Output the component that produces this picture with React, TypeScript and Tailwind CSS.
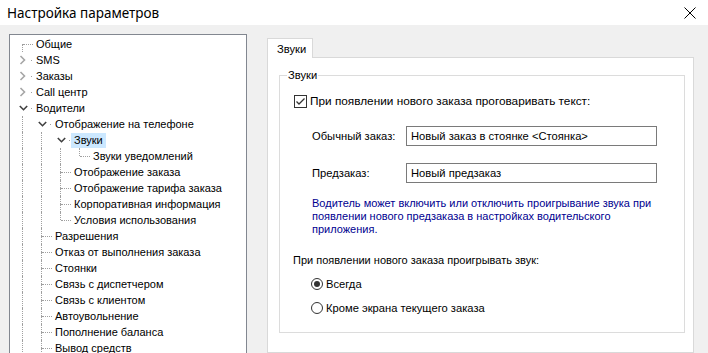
import React from "react";

type Row = {
  d: number;
  t: string;
  kind: "leaf" | "closed" | "open";
  first?: boolean;
  last?: boolean;
  sel?: boolean;
};

const rows: Row[] = [
  { d: 0, t: "Общие", kind: "leaf", first: true },
  { d: 0, t: "SMS", kind: "closed" },
  { d: 0, t: "Заказы", kind: "closed" },
  { d: 0, t: "Call центр", kind: "closed" },
  { d: 0, t: "Водители", kind: "open" },
  { d: 1, t: "Отображение на телефоне", kind: "open" },
  { d: 2, t: "Звуки", kind: "open", sel: true },
  { d: 3, t: "Звуки уведомлений", kind: "leaf", last: true },
  { d: 2, t: "Отображение заказа", kind: "leaf" },
  { d: 2, t: "Отображение тарифа заказа", kind: "leaf" },
  { d: 2, t: "Корпоративная информация", kind: "leaf" },
  { d: 2, t: "Условия использования", kind: "leaf", last: true },
  { d: 1, t: "Разрешения", kind: "leaf" },
  { d: 1, t: "Отказ от выполнения заказа", kind: "leaf" },
  { d: 1, t: "Стоянки", kind: "leaf" },
  { d: 1, t: "Связь с диспетчером", kind: "leaf" },
  { d: 1, t: "Связь с клиентом", kind: "leaf" },
  { d: 1, t: "Автоувольнение", kind: "leaf" },
  { d: 1, t: "Пополнение баланса", kind: "leaf" },
  { d: 1, t: "Вывод средств", kind: "leaf" },
];

const LINE = "border-[#a0a0a0]";

function Gutter() {
  return (
    <div className="w-[19px] h-full shrink-0">
      <div className={`ml-[12px] h-full w-0 border-l border-dotted ${LINE}`} />
    </div>
  );
}

function OwnCell({ r }: { r: Row }) {
  if (r.kind === "leaf") {
    return (
      <div className="w-[23px] h-full shrink-0 flex">
        <div className="w-[12px] shrink-0" />
        <div className="flex flex-col h-full w-px shrink-0">
          <div className={`h-[8px] ${r.first ? "" : `border-l border-dotted ${LINE}`}`} />
          <div className={`h-[8px] ${r.last ? "" : `border-l border-dotted ${LINE}`}`} />
        </div>
        <div className="flex-1 h-full flex items-start pt-[8px]">
          <div className={`w-full h-0 border-t border-dotted ${LINE}`} />
        </div>
      </div>
    );
  }
  return (
    <div className="w-[23px] h-full shrink-0 flex items-center">
      <div className="w-[9px] shrink-0" />
      {r.kind === "closed" ? (
        <svg width="9" height="10" viewBox="0 0 9 10" className="shrink-0">
          <polyline points="1.5,1 5.5,5 1.5,9" fill="none" stroke="#a6a6a6" strokeWidth="1.6" />
        </svg>
      ) : (
        <svg width="9" height="10" viewBox="0 0 9 10" className="shrink-0">
          <polyline points="0.8,3 4.5,6.7 8.2,3" fill="none" stroke="#404040" strokeWidth="1.6" />
        </svg>
      )}
      <div className="flex-1" />
      <div className="w-px h-px bg-[#a0a0a0] mr-px" />
    </div>
  );
}

function Tree() {
  return (
    <div className="w-[238px] h-[400px] shrink-0 border border-[#828790] bg-white pt-[1px] overflow-hidden text-[11px]">
      {rows.map((r, i) => (
        <div key={i} className="flex h-[16px] items-stretch">
          {Array.from({ length: r.d }).map((_, k) => (
            <Gutter key={k} />
          ))}
          <OwnCell r={r} />
          <div className="flex items-center">
            <span
              className={`px-[3px] h-[15px] leading-[15px] whitespace-nowrap ${r.sel ? "bg-[#cce8ff]" : ""}`}
            >
              {r.t}
            </span>
          </div>
        </div>
      ))}
    </div>
  );
}

function TextInput({ value }: { value: string }) {
  return (
    <div className="w-[251px] h-[20px] border border-[#7a7a7a] bg-white pl-[4px] flex items-center whitespace-nowrap overflow-hidden">
      {value}
    </div>
  );
}

function Radio({ checked, label }: { checked?: boolean; label: string }) {
  return (
    <div className="flex items-center h-[16px] ml-[31px]">
      <div className="w-[12px] h-[12px] rounded-full border border-[#333333] bg-white flex items-center justify-center shrink-0">
        {checked && <div className="w-[6px] h-[6px] rounded-full bg-[#333333]" />}
      </div>
      <span className="ml-[3px]">{label}</span>
    </div>
  );
}

export default function App() {
  return (
    <div
      className="w-[708px] h-[353px] overflow-hidden bg-[#f0f0f0] text-black text-[11.2px] leading-[14px]"
      style={{ fontFamily: '"Liberation Sans", Arial, sans-serif' }}
    >
      {/* Title bar */}
      <div className="h-[25px] bg-white flex items-center justify-between pl-[7px] pr-[12px]">
        <span className="text-[13.5px]" style={{ fontFamily: '"Noto Sans", sans-serif' }}>
          Настройка параметров
        </span>
        <svg width="12" height="12" viewBox="0 0 12 12">
          <path d="M0.5 0.5 L11.5 11.5 M11.5 0.5 L0.5 11.5" stroke="#000" strokeWidth="1" />
        </svg>
      </div>

      {/* Body */}
      <div className="h-[328px] flex overflow-hidden">
        <div className="pl-[9px] pt-[9px]">
          <Tree />
        </div>

        <div className="ml-[20px] pt-[13px] flex flex-col">
          {/* Tab header */}
          <div className="flex">
            <div className="relative z-10 -mb-px h-[20px] w-[46px] pl-[9px] border border-b-0 border-[#d9d9d9] bg-white flex items-center">
              Звуки
            </div>
          </div>
          {/* Panel */}
          <div className="w-[427px] h-[400px] border border-[#d9d9d9] bg-white pl-[11px] pt-[10px]">
            <fieldset className="w-[406px] border border-[#dcdcdc] pb-[16px]">
              <legend className="ml-[7px] px-[1px] leading-[14px]">Звуки</legend>

              {/* Checkbox */}
              <div className="flex items-center h-[16px] mt-[11px] ml-[14px]">
                <div className="w-[13px] h-[13px] border border-[#333333] bg-white flex items-center justify-center shrink-0">
                  <svg width="11" height="11" viewBox="0 0 11 11">
                    <polyline points="1.5,5.5 4,8 9.5,2.5" fill="none" stroke="#333333" strokeWidth="1.3" />
                  </svg>
                </div>
                <span className="ml-[3px] text-[11.8px]">При появлении нового заказа проговаривать текст:</span>
              </div>

              <div className="flex items-center h-[20px] mt-[17px] ml-[32px]">
                <span className="w-[94px] shrink-0">Обычный заказ:</span>
                <TextInput value="Новый заказ в стоянке <Стоянка>" />
              </div>

              <div className="flex items-center h-[20px] mt-[17px] ml-[32px]">
                <span className="w-[94px] shrink-0">Предзаказ:</span>
                <TextInput value="Новый предзаказ" />
              </div>

              <p className="mt-[14px] ml-[32px] leading-[13px] text-[11px] text-[#000090] whitespace-nowrap">
                Водитель может включить или отключить проигрывание звука при
                <br />
                появлении нового предзаказа в настройках водительского
                <br />
                приложения.
              </p>

              <div className="mt-[17px] ml-[13px] h-[14px] flex items-center text-[11px]">
                При появлении нового заказа проигрывать звук:
              </div>

              <div className="mt-[9px]">
                <Radio checked label="Всегда" />
              </div>
              <div className="mt-[8px]">
                <Radio label="Кроме экрана текущего заказа" />
              </div>
            </fieldset>
          </div>
        </div>
      </div>
    </div>
  );
}
